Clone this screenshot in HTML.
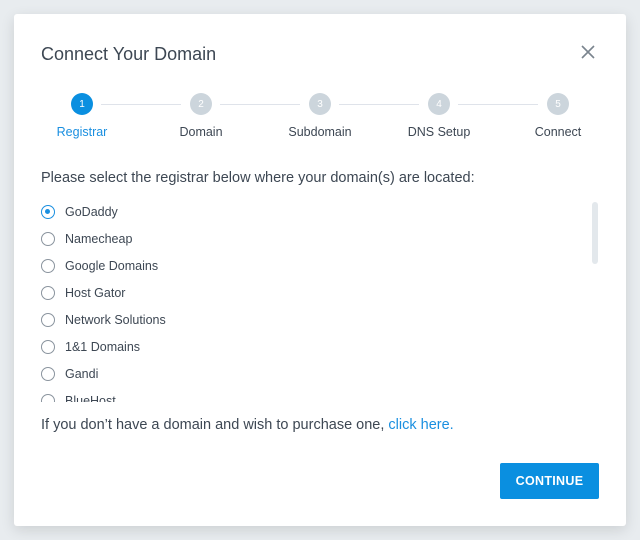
<!DOCTYPE html>
<html><head><style>
*{margin:0;padding:0;box-sizing:border-box}
body{width:640px;height:540px;background:#e8ecef;font-family:"Liberation Sans",sans-serif;position:relative;overflow:hidden}
.dlg{position:absolute;left:14px;top:14px;width:612px;height:512px;background:#fff;border-radius:3px;box-shadow:0 4px 14px rgba(0,0,0,.12)}
.t{position:absolute;left:27px;top:30px;font-size:18px;color:#3d4753}
.x{position:absolute;left:566px;top:30px}
.c{position:absolute;top:79px;width:22px;height:22px;border-radius:50%;background:#ccd5dc;color:#fff;font-size:10px;text-align:center;line-height:23px}
.ln{position:absolute;top:90px;height:1px;background:#dfe3ea}
.lb{position:absolute;top:111px;font-size:12.5px;color:#3d4753;transform:translateX(-50%);white-space:nowrap}
.q{position:absolute;left:27px;top:156px;font-size:14.5px;color:#3d4753}
.list{position:absolute;left:27px;top:184px;width:540px;height:204px;overflow:hidden}
.it{height:27px;display:flex;align-items:center;font-size:12.5px;color:#3d4753}
.r{width:14px;height:14px;border:1.5px solid #8a949e;border-radius:50%;margin-right:10px;position:relative}
.r.on{border-color:#1a8fe0}
.r.on:after{content:"";position:absolute;left:3px;top:3px;width:5px;height:5px;border-radius:50%;background:#1a8fe0}
.sb{position:absolute;left:578px;top:188px;width:6px;height:62px;border-radius:3px;background:#e3e8ec}
.f{position:absolute;left:27px;top:403px;font-size:14.5px;color:#3d4753}
.f a{color:#1a8fe0;text-decoration:none}
.btn{position:absolute;left:486px;top:449px;width:99px;height:36px;background:#0a8fe0;color:#fff;font-size:12.5px;font-weight:bold;text-align:center;line-height:36px;border-radius:2px;letter-spacing:.3px}
</style></head><body>
<div class="dlg">
<div class="t">Connect Your Domain</div>
<svg class="x" width="16" height="16" viewBox="0 0 16 16"><path d="M2 2L14 14M14 2L2 14" stroke="#7a848e" stroke-width="1.6"/></svg>
<div class="c" style="left:57px;background:#0a8fe0">1</div>
<div class="c" style="left:176px">2</div>
<div class="c" style="left:295px">3</div>
<div class="c" style="left:414px">4</div>
<div class="c" style="left:533px">5</div>
<div class="ln" style="left:87px;width:80px"></div>
<div class="ln" style="left:206px;width:80px"></div>
<div class="ln" style="left:325px;width:80px"></div>
<div class="ln" style="left:444px;width:80px"></div>
<div class="lb" style="left:68px;color:#1a8fe0">Registrar</div>
<div class="lb" style="left:187px">Domain</div>
<div class="lb" style="left:306px">Subdomain</div>
<div class="lb" style="left:425px">DNS Setup</div>
<div class="lb" style="left:544px">Connect</div>
<div class="q">Please select the registrar below where your domain(s) are located:</div>
<div class="list">
<div class="it"><span class="r on"></span>GoDaddy</div>
<div class="it"><span class="r"></span>Namecheap</div>
<div class="it"><span class="r"></span>Google Domains</div>
<div class="it"><span class="r"></span>Host Gator</div>
<div class="it"><span class="r"></span>Network Solutions</div>
<div class="it"><span class="r"></span>1&amp;1 Domains</div>
<div class="it"><span class="r"></span>Gandi</div>
<div class="it"><span class="r"></span>BlueHost</div>
</div>
<div class="sb"></div>
<div class="f">If you don’t have a domain and wish to purchase one, <a>click here.</a></div>
<div class="btn">CONTINUE</div>
</div>
</body></html>
